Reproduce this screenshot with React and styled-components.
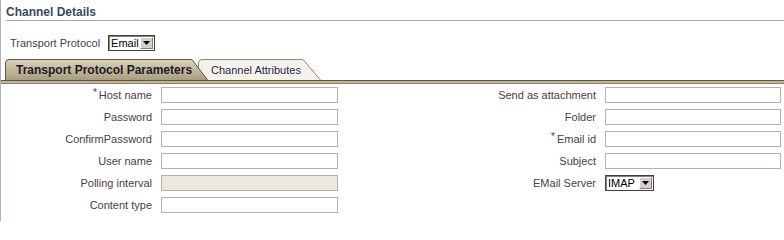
import React from "react";
import styled, { createGlobalStyle } from "styled-components";

const GlobalStyle = createGlobalStyle`
  html, body {
    margin: 0;
    padding: 0;
    background: #ffffff;
  }
  body {
    font-family: "Liberation Sans", Arial, sans-serif;
  }
`;

const leftFields = [
  { label: "Host name", required: true },
  { label: "Password" },
  { label: "ConfirmPassword" },
  { label: "User name" },
  { label: "Polling interval", disabled: true },
  { label: "Content type" },
];

const rightFields = [
  { label: "Send as attachment" },
  { label: "Folder" },
  { label: "Email id", required: true },
  { label: "Subject" },
  { label: "EMail Server", select: "IMAP" },
];

function Select({ value, width }) {
  return (
    <SelectBox $width={width}>
      <SelectValue>{value}</SelectValue>
      <SelectButton>
        <svg width="7" height="4" viewBox="0 0 7 4">
          <path d="M0 0 H7 L3.5 4 Z" fill="#000" />
        </svg>
      </SelectButton>
    </SelectBox>
  );
}

function Tab({ active, width, label }) {
  const slant = active ? 15 : 17;
  const d = `M0.5 21 L0.5 4 Q0.5 0.5 4 0.5 L${width - slant - 1} 0.5 L${width - 0.5} 21`;
  return (
    <TabItem $active={active} $width={width}>
      <TabShape width={width} height="21" viewBox={`0 0 ${width} 21`}>
        <defs>
          <linearGradient id="activeTab" x1="0" y1="0" x2="0" y2="1">
            <stop offset="0" stopColor="#d9d2bc" />
            <stop offset="1" stopColor="#aa9e7e" />
          </linearGradient>
        </defs>
        <path
          d={d}
          fill={active ? "url(#activeTab)" : "#f4f2ea"}
          stroke={active ? "#5e5646" : "#8f8a76"}
          strokeWidth="1"
        />
      </TabShape>
      <TabLabel $active={active}>{label}</TabLabel>
    </TabItem>
  );
}

function Field({ label, required, disabled, select }) {
  return (
    <>
      <Label>
        {required && <Star>*</Star>}
        {label}
      </Label>
      {select ? (
        <Cell>
          <Select value={select} width={49} />
        </Cell>
      ) : (
        <Input disabled={disabled} />
      )}
    </>
  );
}

export default function App() {
  const rows = leftFields.map((left, i) => ({ left, right: rightFields[i] }));

  return (
    <Page>
      <GlobalStyle />
      <Header>Channel Details</Header>

      <ProtocolRow>
        <ProtocolLabel>Transport Protocol</ProtocolLabel>
        <Select value="Email" width={47} />
      </ProtocolRow>

      <Tabs>
        <Tab active width={203} label="Transport Protocol Parameters" />
        <Tab width={123} label="Channel Attributes" />
      </Tabs>
      <TabBar />

      <Form>
        {rows.map(({ left, right }) => (
          <React.Fragment key={left.label}>
            <Field {...left} />
            {right ? <Field {...right} /> : <><span /><span /></>}
          </React.Fragment>
        ))}
      </Form>
    </Page>
  );
}

const Page = styled.div`
  width: 784px;
  min-height: 221px;
  box-sizing: border-box;
  border-left: 1px solid #9fb2cf;
  background: #ffffff;
`;

const Header = styled.div`
  margin-left: 5px;
  padding: 5px 0 1px 0;
  line-height: 14px;
  font-size: 12px;
  font-weight: bold;
  color: #3a4a5e;
  border-bottom: 1px solid #a7a7b6;
`;

const ProtocolRow = styled.div`
  display: flex;
  align-items: center;
  gap: 8px;
  margin-top: 14px;
  padding-left: 9px;
  height: 16px;
`;

const ProtocolLabel = styled.span`
  font-size: 11px;
  color: #4d3c52;
`;

const SelectBox = styled.div`
  display: flex;
  align-items: stretch;
  width: ${(p) => p.$width}px;
  height: 16px;
  box-sizing: border-box;
  border: 1px solid #404040;
  box-shadow: inset 1px 1px 0 #808080;
  background: #ffffff;
`;

const SelectValue = styled.span`
  flex: 1;
  padding-left: 2px;
  font-size: 11px;
  line-height: 14px;
  color: #000000;
  overflow: hidden;
  white-space: nowrap;
`;

const SelectButton = styled.span`
  width: 13px;
  margin: 1px 1px 1px 0;
  display: flex;
  align-items: center;
  justify-content: center;
  background: #d4d0c8;
  border-top: 1px solid #ffffff;
  border-left: 1px solid #ffffff;
  border-right: 1px solid #808080;
  border-bottom: 1px solid #808080;
  box-sizing: border-box;
`;

const Tabs = styled.div`
  display: flex;
  align-items: flex-end;
  margin-top: 8px;
  padding-left: 4px;
  height: 21px;
`;

const TabItem = styled.div`
  position: relative;
  width: ${(p) => p.$width}px;
  height: 21px;
  margin-left: ${(p) => (p.$active ? 0 : -10)}px;
  z-index: ${(p) => (p.$active ? 2 : 1)};
  display: flex;
  align-items: center;
`;

const TabShape = styled.svg`
  position: absolute;
  left: 0;
  top: 0;
`;

const TabLabel = styled.span`
  position: relative;
  padding-left: ${(p) => (p.$active ? 11 : 13)}px;
  font-size: ${(p) => (p.$active ? 12 : 11)}px;
  font-weight: ${(p) => (p.$active ? "bold" : "normal")};
  color: ${(p) => (p.$active ? "#1c1c28" : "#28284a")};
  white-space: nowrap;
`;

const TabBar = styled.div`
  height: 2px;
  border-top: 1px solid #5c5747;
  border-bottom: 1px solid #8d8468;
  background: #c0b495;
`;

const Form = styled.div`
  display: grid;
  grid-template-columns: 151px 177px 1fr 176px;
  column-gap: 9px;
  row-gap: 6px;
  padding: 3px 3px 0 0;
  align-items: center;
`;

const Label = styled.span`
  text-align: right;
  font-size: 11px;
  line-height: 16px;
  color: #4d3c3f;
  white-space: nowrap;
`;

const Star = styled.span`
  margin-right: 2px;
  font-size: 10px;
  vertical-align: top;
  line-height: 12px;
`;

const Cell = styled.div`
  display: flex;
`;

const Input = styled.input`
  width: 100%;
  height: 16px;
  box-sizing: border-box;
  margin: 0;
  border: 1px solid #b4b4a6;
  background: ${(p) => (p.disabled ? "#ebeadd" : "#ffffff")};
  font-family: inherit;
  font-size: 11px;
  padding: 0 2px;
  outline: none;
`;
